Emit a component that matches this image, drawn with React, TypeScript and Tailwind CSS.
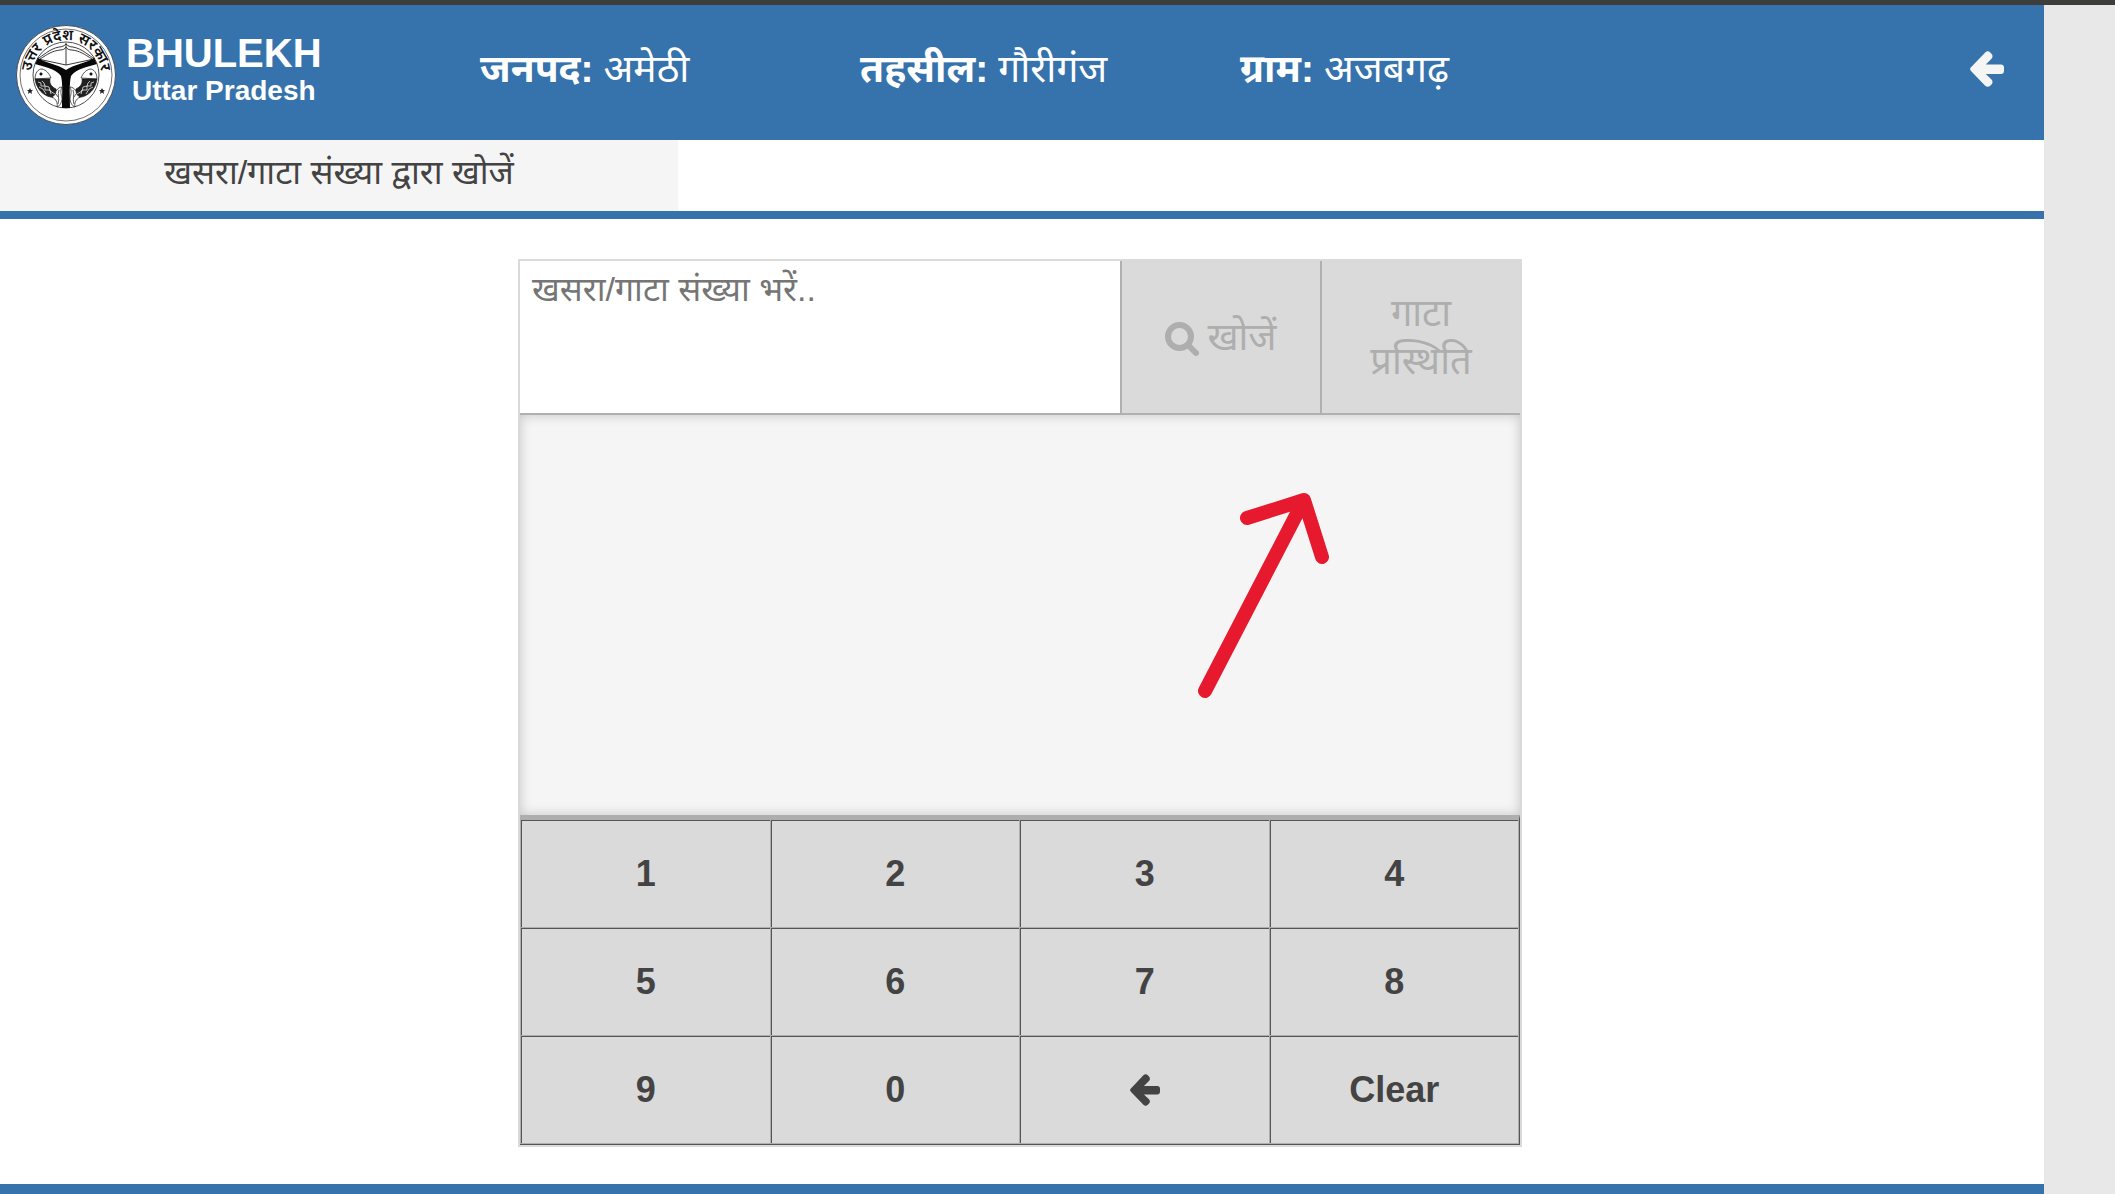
import { useState } from 'react';

const KEYS = ['1', '2', '3', '4', '5', '6', '7', '8', '9', '0', 'back', 'Clear'];

const PLACE = [
  { label: 'जनपद', value: 'अमेठी' },
  { label: 'तहसील', value: 'गौरीगंज' },
  { label: 'ग्राम', value: 'अजबगढ़' },
];

function ArrowLeft({ className }: { className: string }) {
  return (
    <svg viewBox="0 0 34 36" className={className} fill="currentColor" aria-hidden="true">
      <path d="M1 16.200 15.200 1.400c1.500-1.500 3.600-1.500 5 0l1.300 1.400c1.400 1.400 1.400 3.500 0 5L15.800 13.500H31c1.800 0 3 1.300 3 3v3.500c0 1.700-1.200 3-3 3H15.800l5.700 5.400c1.400 1.500 1.400 3.600 0 5l-1.300 1.300c-1.400 1.400-3.500 1.400-5 0L1 19.900c-1.200-1.200-1.200-2.600 0-3.700Z" />
    </svg>
  );
}

function SearchIcon() {
  return (
    <svg viewBox="0 0 34 34" className="mt-1 size-[34px] shrink-0" fill="none" stroke="currentColor" strokeLinecap="round" aria-hidden="true">
      <circle cx="14.500" cy="14.500" r="11.500" strokeWidth="6" />
      <path d="m23.500 23.500 7.500 7.500" strokeWidth="6" />
    </svg>
  );
}

function Fish() {
  return (
    <g stroke="#111" fill="none" strokeWidth="0.7">
      <path d="M19 54c0-6 3-10 7-10 4 1 7 4 9 9Z" fill="#fff" />
      <circle cx="25" cy="49" r="1.200" fill="#111" />
      <path d="M19 54h15c-1 5 2 8 6 10l1 8c-8 2-20-4-22-18Z" fill="#222" />
      <path d="m22 57 3 1 0 3 4 0 0 4 5 0 1 4M26 56l2 2 1 3 4 1 1 4 5 3M23 62l4 2 3 5" stroke="#fff" />
      <path d="M40 66c2-3 4-4 6-4-2 4-1 7 0 11 0 4-2 8-5 9 1-4-1-8-5-10 2-1 4-3 4-6Z" fill="#fff" />
      <path d="M43 65c-2 5 1 8-1 14M40 69l2 3" />
    </g>
  );
}

function Emblem() {
  return (
    <svg viewBox="0 0 100 100" className="size-[100px] shrink-0" role="img" aria-label="उत्तर प्रदेश सरकार">
      <circle cx="50" cy="50" r="49.500" fill="#fff" stroke="#333" strokeWidth="0.8" />
      <circle cx="50" cy="50" r="46" fill="none" stroke="#333" strokeWidth="0.7" />
      <circle cx="50" cy="50" r="33" fill="none" stroke="#222" strokeWidth="0.8" />
      <path id="emblem-arc" d="M15 60V50a35 35 0 0 1 70 0v10" fill="none" />
      <text className="text-[15px] font-semibold" fill="#111" textAnchor="middle">
        <textPath href="#emblem-arc" startOffset="50%">उत्तर प्रदेश सरकार</textPath>
      </text>
      <g fill="none" stroke="#222" strokeWidth="0.9">
        <path d="M21 34c6-3 12-10 22-12 3 0 5-1 7-3 2 2 4 3 7 3 10 2 16 9 22 12" />
        <path d="M24 34c8-5 12-8 20-9 3 0 5-1 6-3 1 2 3 3 6 3 8 1 12 4 20 9" />
        <path d="M22 34l28 6 28-6M50 18v22" />
      </g>
      <Fish />
      <g transform="translate(100 0) scale(-1 1)">
        <Fish />
      </g>
      <path d="M22 33c8 5 19 6 28 12 9-6 20-7 28-12l3 6c-9 3-20 4-26 12-2 8-1 20-1 32h-8c0-12 1-24-1-32-6-8-17-9-26-12Z" fill="#080808" />
      <path d="m14 63 1 2h2l-1.500 1.500.5 2.500-2-1.500-2 1.500.5-2.500L11 65h2ZM86 63l1 2h2l-1.500 1.500.5 2.500-2-1.500-2 1.500.5-2.500L83 65h2Z" fill="#222" />
    </svg>
  );
}

export default function App() {
  const [khasra, setKhasra] = useState('');

  const press = (key: string) => {
    if (key === 'Clear') setKhasra('');
    else if (key === 'back') setKhasra(khasra.slice(0, -1));
    else setKhasra(khasra + key);
  };

  return (
    <div className="min-h-screen flex flex-col border-t-[5px] border-[#3d3e3c] bg-white font-['Liberation_Sans','Noto_Sans',sans-serif] text-[#434343]">
      <div className="flex flex-1">
        <div className="flex flex-1 flex-col">
          <header className="flex h-[135px] bg-[#3673ac] text-white">
            <div className="flex w-[480px] items-center gap-2.5 pl-4 pt-1">
              <Emblem />
              <div className="pb-2 text-center font-bold">
                <h1 className="text-[40px] leading-10">BHULEKH</h1>
                <p className="text-[28px] leading-9">Uttar Pradesh</p>
              </div>
            </div>
            <dl className="grid w-[1140px] grid-cols-3 pt-9 text-[39px] leading-[56px]">
              {PLACE.map((p) => (
                <div key={p.label} className="flex gap-2.5">
                  <dt className="font-bold">{p.label}:</dt>
                  <dd>{p.value}</dd>
                </div>
              ))}
            </dl>
            <button type="button" aria-label="वापस" className="mb-2 ml-auto mr-10 self-center text-[#f5f5f5]">
              <ArrowLeft className="h-9 w-[34px]" />
            </button>
          </header>

          <nav className="flex h-[79px] border-b-8 border-[#3673ac]">
            <a href="#khasra" className="w-[678px] bg-[#f5f5f5] text-center text-[34px] leading-[64px]">
              खसरा/गाटा संख्या द्वारा खोजें
            </a>
          </nav>

          <main className="flex flex-1 justify-center pb-9 pr-1 pt-10">
            <section className="w-[1004px] self-start border-2 border-[#dadada]">
              <div className="flex h-[154px] border-b-2 border-[#b0b0b0]">
                <textarea
                  id="khasra"
                  aria-label="खसरा/गाटा संख्या"
                  value={khasra}
                  onChange={(e) => setKhasra(e.target.value)}
                  placeholder="खसरा/गाटा संख्या भरें.."
                  className="block flex-1 resize-none px-3 py-1 text-[34px] leading-[48px] outline-none placeholder:text-[#757575]"
                />
                <button type="button" disabled className="flex w-[200px] items-center justify-center gap-2 border-l-2 border-[#b0b0b0] bg-[#dadada] text-[38px] text-[#aeaeae]">
                  <SearchIcon />
                  खोजें
                </button>
                <button type="button" disabled className="w-[200px] border-l-2 border-[#b0b0b0] bg-[#dadada] px-8 text-[38px] leading-[48px] text-[#aeaeae]">
                  गाटा प्रस्थिति
                </button>
              </div>

              <div className="relative h-[400px] bg-[#f5f5f5] shadow-[inset_0_0_12px_#c4c4c4]">
                <svg viewBox="0 0 170 240" className="absolute left-[660px] top-[55px] h-[240px] w-[170px]" fill="none" stroke="#e6192e" strokeWidth="14" strokeLinecap="round" strokeLinejoin="round" aria-hidden="true">
                  <path d="M25 221 124 30M67 48l57-18 18 57" />
                </svg>
              </div>

              <div className="border-b border-r border-t-4 border-b-[#555] border-r-[#555] border-t-[#aeaeae]">
                <div className="grid grid-cols-4 border-b border-r border-[#aeaeae]">
                  {KEYS.map((key) => (
                    <div key={key} className="h-[108px] border-l border-t border-[#aeaeae]">
                      <button
                        type="button"
                        onClick={() => press(key)}
                        aria-label={key === 'back' ? 'Backspace' : undefined}
                        className="flex size-full items-center justify-center border-l border-t border-[#555] bg-[#dadada] text-[36px] font-bold"
                      >
                        {key === 'back' ? <ArrowLeft className="h-8 w-[30px]" /> : key}
                      </button>
                    </div>
                  ))}
                </div>
              </div>
            </section>
          </main>
          <footer className="h-[10px] bg-[#3673ac]" />
        </div>
        <div className="w-[71px] bg-[#e8e8e8]" />
      </div>
    </div>
  );
}
